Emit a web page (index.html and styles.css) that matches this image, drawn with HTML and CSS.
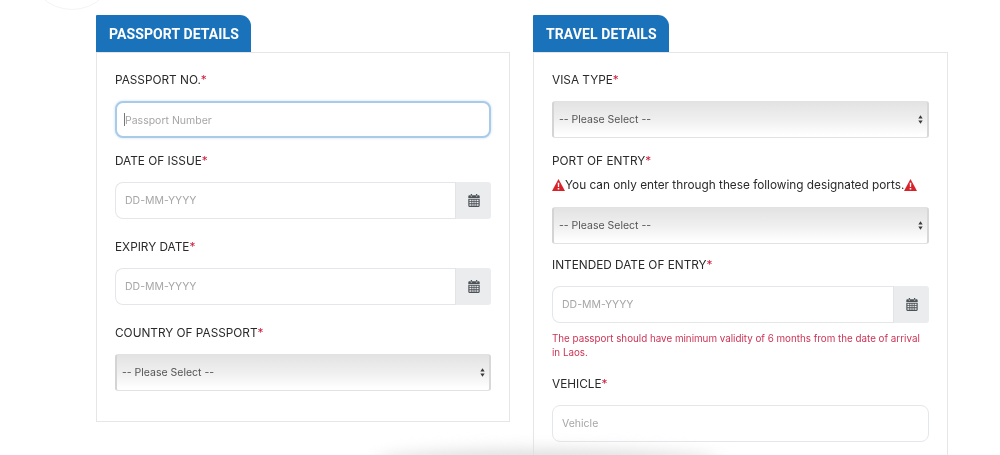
FILE: index.html
```html
<!DOCTYPE html>
<html lang="en">
<head>
<meta charset="utf-8">
<title>Visa application</title>
<link rel="stylesheet" href="styles.css">
</head>
<body>
<div class="deco-circle"></div>
<main class="columns">
  <section class="panel panel-left">
    <h2 class="tab tab-passport">PASSPORT DETAILS</h2>
    <div class="box">
      <div class="field">
        <label class="label">PASSPORT NO.<span class="req">*</span></label>
        <div class="focus-wrap">
          <input class="control control-focus" type="text" placeholder="Passport Number">
          <span class="caret"></span>
        </div>
      </div>
      <div class="field field-wide">
        <label class="label">DATE OF ISSUE<span class="req">*</span></label>
        <div class="group">
          <input class="control control-group" type="text" placeholder="DD-MM-YYYY">
          <span class="addon">
            <svg class="cal" viewBox="0 0 14 16" aria-hidden="true"><path d="M3 0h1.6v2.2H3zM9.4 0H11v2.2H9.4z"/><path d="M1.4 1.5H3v1.6h1.6V1.5h4.8v1.6H11V1.5h1.6c.7 0 1.4.6 1.4 1.3V5H0V2.8c0-.7.7-1.3 1.4-1.3z"/><path fill-rule="evenodd" d="M0 5.8h14v8.8c0 .8-.6 1.4-1.4 1.4H1.4C.6 16 0 15.400 0 14.600zM1.400 7v1.800h2.400V7zm3.400 0v1.800h1.700V7zm2.700 0v1.800h1.700V7zm2.700 0v1.800h2.400V7zM1.400 9.800v1.700h2.400V9.800zm3.400 0v1.700h1.700V9.800zm2.700 0v1.700h1.700V9.800zm2.700 0v1.700h2.400V9.800zM1.400 12.500v2h2.400v-2zm3.400 0v2h1.700v-2zm2.700 0v2h1.700v-2zm2.700 0v2h2.400v-2z"/></svg>
          </span>
        </div>
      </div>
      <div class="field field-wide">
        <label class="label">EXPIRY DATE<span class="req">*</span></label>
        <div class="group">
          <input class="control control-group" type="text" placeholder="DD-MM-YYYY">
          <span class="addon">
            <svg class="cal" viewBox="0 0 14 16" aria-hidden="true"><path d="M3 0h1.6v2.2H3zM9.4 0H11v2.2H9.4z"/><path d="M1.4 1.5H3v1.6h1.6V1.5h4.8v1.6H11V1.5h1.6c.7 0 1.4.6 1.4 1.3V5H0V2.8c0-.7.7-1.3 1.4-1.3z"/><path fill-rule="evenodd" d="M0 5.8h14v8.8c0 .8-.6 1.4-1.4 1.4H1.4C.6 16 0 15.400 0 14.600zM1.400 7v1.800h2.400V7zm3.400 0v1.800h1.700V7zm2.700 0v1.800h1.700V7zm2.700 0v1.800h2.400V7zM1.400 9.800v1.700h2.400V9.800zm3.400 0v1.700h1.700V9.800zm2.700 0v1.700h1.700V9.800zm2.700 0v1.700h2.400V9.800zM1.400 12.500v2h2.400v-2zm3.400 0v2h1.700v-2zm2.700 0v2h1.700v-2zm2.700 0v2h2.400v-2z"/></svg>
          </span>
        </div>
      </div>
      <div class="field">
        <label class="label">COUNTRY OF PASSPORT<span class="req">*</span></label>
        <div class="select">-- Please Select --
          <svg class="updown" viewBox="0 0 6 10" aria-hidden="true"><path d="M3 0l2.600 3.800H.4zM3 10L.4 6.200h5.200z"/></svg>
        </div>
      </div>
    </div>
  </section>

  <section class="panel panel-right">
    <h2 class="tab tab-travel">TRAVEL DETAILS</h2>
    <div class="box box-open">
      <div class="field">
        <label class="label">VISA TYPE<span class="req">*</span></label>
        <div class="select">-- Please Select --
          <svg class="updown" viewBox="0 0 6 10" aria-hidden="true"><path d="M3 0l2.600 3.800H.4zM3 10L.4 6.200h5.200z"/></svg>
        </div>
      </div>
      <div class="field field-narrow">
        <label class="label label-tight">PORT OF ENTRY<span class="req">*</span></label>
        <p class="warn">
          <svg class="tri" viewBox="0 0 13 12" aria-hidden="true"><path class="tri-bg" d="M6.500 0l6.500 12H0z"/><path class="tri-fg" d="M5.700 3.800h1.600l-.2 4.300H5.900zM5.700 8.900h1.600v1.600H5.700z"/></svg><span>You can only enter through these following designated ports.</span><svg class="tri" viewBox="0 0 13 12" aria-hidden="true"><path class="tri-bg" d="M6.500 0l6.500 12H0z"/><path class="tri-fg" d="M5.700 3.800h1.600l-.2 4.300H5.900zM5.700 8.900h1.600v1.600H5.700z"/></svg>
        </p>
        <div class="select">-- Please Select --
          <svg class="updown" viewBox="0 0 6 10" aria-hidden="true"><path d="M3 0l2.600 3.800H.4zM3 10L.4 6.200h5.200z"/></svg>
        </div>
      </div>
      <div class="field">
        <label class="label">INTENDED DATE OF ENTRY<span class="req">*</span></label>
        <div class="group">
          <input class="control control-group" type="text" placeholder="DD-MM-YYYY">
          <span class="addon">
            <svg class="cal" viewBox="0 0 14 16" aria-hidden="true"><path d="M3 0h1.6v2.2H3zM9.4 0H11v2.2H9.4z"/><path d="M1.4 1.5H3v1.6h1.6V1.5h4.8v1.6H11V1.5h1.6c.7 0 1.4.6 1.4 1.3V5H0V2.8c0-.7.7-1.3 1.4-1.3z"/><path fill-rule="evenodd" d="M0 5.8h14v8.8c0 .8-.6 1.4-1.4 1.4H1.4C.6 16 0 15.400 0 14.600zM1.400 7v1.800h2.400V7zm3.400 0v1.800h1.700V7zm2.700 0v1.800h1.700V7zm2.700 0v1.800h2.400V7zM1.400 9.800v1.700h2.400V9.800zm3.400 0v1.700h1.700V9.800zm2.700 0v1.700h1.700V9.800zm2.700 0v1.700h2.400V9.800zM1.400 12.500v2h2.400v-2zm3.400 0v2h1.700v-2zm2.700 0v2h1.700v-2zm2.700 0v2h2.400v-2z"/></svg>
          </span>
        </div>
        <p class="help">The passport should have minimum validity of 6 months from the date of arrival in Laos.</p>
      </div>
      <div class="field">
        <label class="label">VEHICLE<span class="req">*</span></label>
        <input class="control" type="text" placeholder="Vehicle">
      </div>
    </div>
  </section>
</main>
<div class="deco-shadow"></div>
</body>
</html>
```
FILE: styles.css
```css
* { box-sizing: border-box; }
html, body { margin: 0; height: 455px; overflow: hidden; background: #fff; }
body { position: relative; font-family: Inter, "Liberation Sans", sans-serif; color: #2b2b2b; }

.deco-circle {
  position: absolute; left: 28px; top: -78px; width: 88px; height: 88px;
  border-radius: 50%; border: 1px solid #f4f4f4;
}
.deco-shadow {
  position: absolute; left: 375px; top: 450px; width: 345px; height: 26px;
  border-radius: 50%; background: #dcdcdc; filter: blur(8px);
}

.columns { display: flex; gap: 23px; padding: 15px 0 0 96px; align-items: flex-start; filter: blur(0.3px); }
.panel { width: 414px; flex: none; }
.panel-right { width: 415px; }

.tab {
  margin: 0; height: 37px; display: flex; align-items: center;
  padding-left: 13px; background: #1a73ba; color: #fff;
  font-family: Roboto, sans-serif; font-size: 14px; font-weight: 700; letter-spacing: 0.1px; border-radius: 1px 11px 0 0;
}
.tab-passport { width: 155px; }
.tab-travel { width: 136px; }

.box { border: 1px solid #e6e6e6; padding: 16px 18px 30px; }
.box-open { height: 420px; }

.field { margin-bottom: 12px; }
.field-wide { margin-bottom: 17px; }
.field-narrow { margin-bottom: 10px; }
.box .field:last-child { margin-bottom: 0; }

.label { display: block; height: 20px; line-height: 22px; margin-bottom: 12px; font-size: 11.800px; color: #2a2a2a; }
.label-tight { margin-bottom: 5px; }
.req { color: #d0213f; }

.control {
  display: block; width: 100%; height: 37px; padding: 0 9px;
  border: 1px solid #e4e6e9; border-radius: 8px; outline: 0; background: #fff;
  font-family: Inter, sans-serif; font-size: 10.500px; color: #333;
}
.control::placeholder { color: #a6a6a6; opacity: 1; }
.control-focus { border: 2px solid #a9cbe8; box-shadow: 0 0 3px #c9def2; padding: 2px 8px 0; }
.control-group { flex: 1; min-width: 0; border-radius: 8px 0 0 8px; border-right: 0; }

.focus-wrap { position: relative; }
.caret { position: absolute; left: 9px; top: 12px; width: 1px; height: 13px; background: #777; }

.group { display: flex; height: 37px; }
.addon {
  flex: none; width: 36px; display: flex; align-items: center; justify-content: center;
  background: #ebecee; border-left: 1px solid #e4e4e4; border-radius: 0 3px 3px 0;
}
.cal { width: 12px; height: 13px; fill: #4d5257; }

.select {
  position: relative; height: 37px; line-height: 36px; padding-left: 5px;
  font-size: 10.500px; color: #555; font-family: Inter, sans-serif;
  border-radius: 3px; border: 1px solid #e2e2e2; border-left: 2px solid #d4d4d4; border-right: 2px solid #d8d8d8;
  background: linear-gradient(#e3e3e3 0%, #efefef 50%, #fff 95%);
}
.updown { position: absolute; right: 4px; top: 13px; width: 5px; height: 9px; fill: #3a3a3a; }

.warn { display: flex; align-items: center; height: 20px; margin: 0 0 12px; font-size: 11.800px; color: #2a2a2a; white-space: nowrap; }
.tri { width: 13px; height: 12px; flex: none; }
.tri-bg { fill: #d8232a; }
.tri-fg { fill: #fff; }

.help { margin: 9px 0 13px; font-size: 9.800px; line-height: 14px; color: #cc3355; }
```
